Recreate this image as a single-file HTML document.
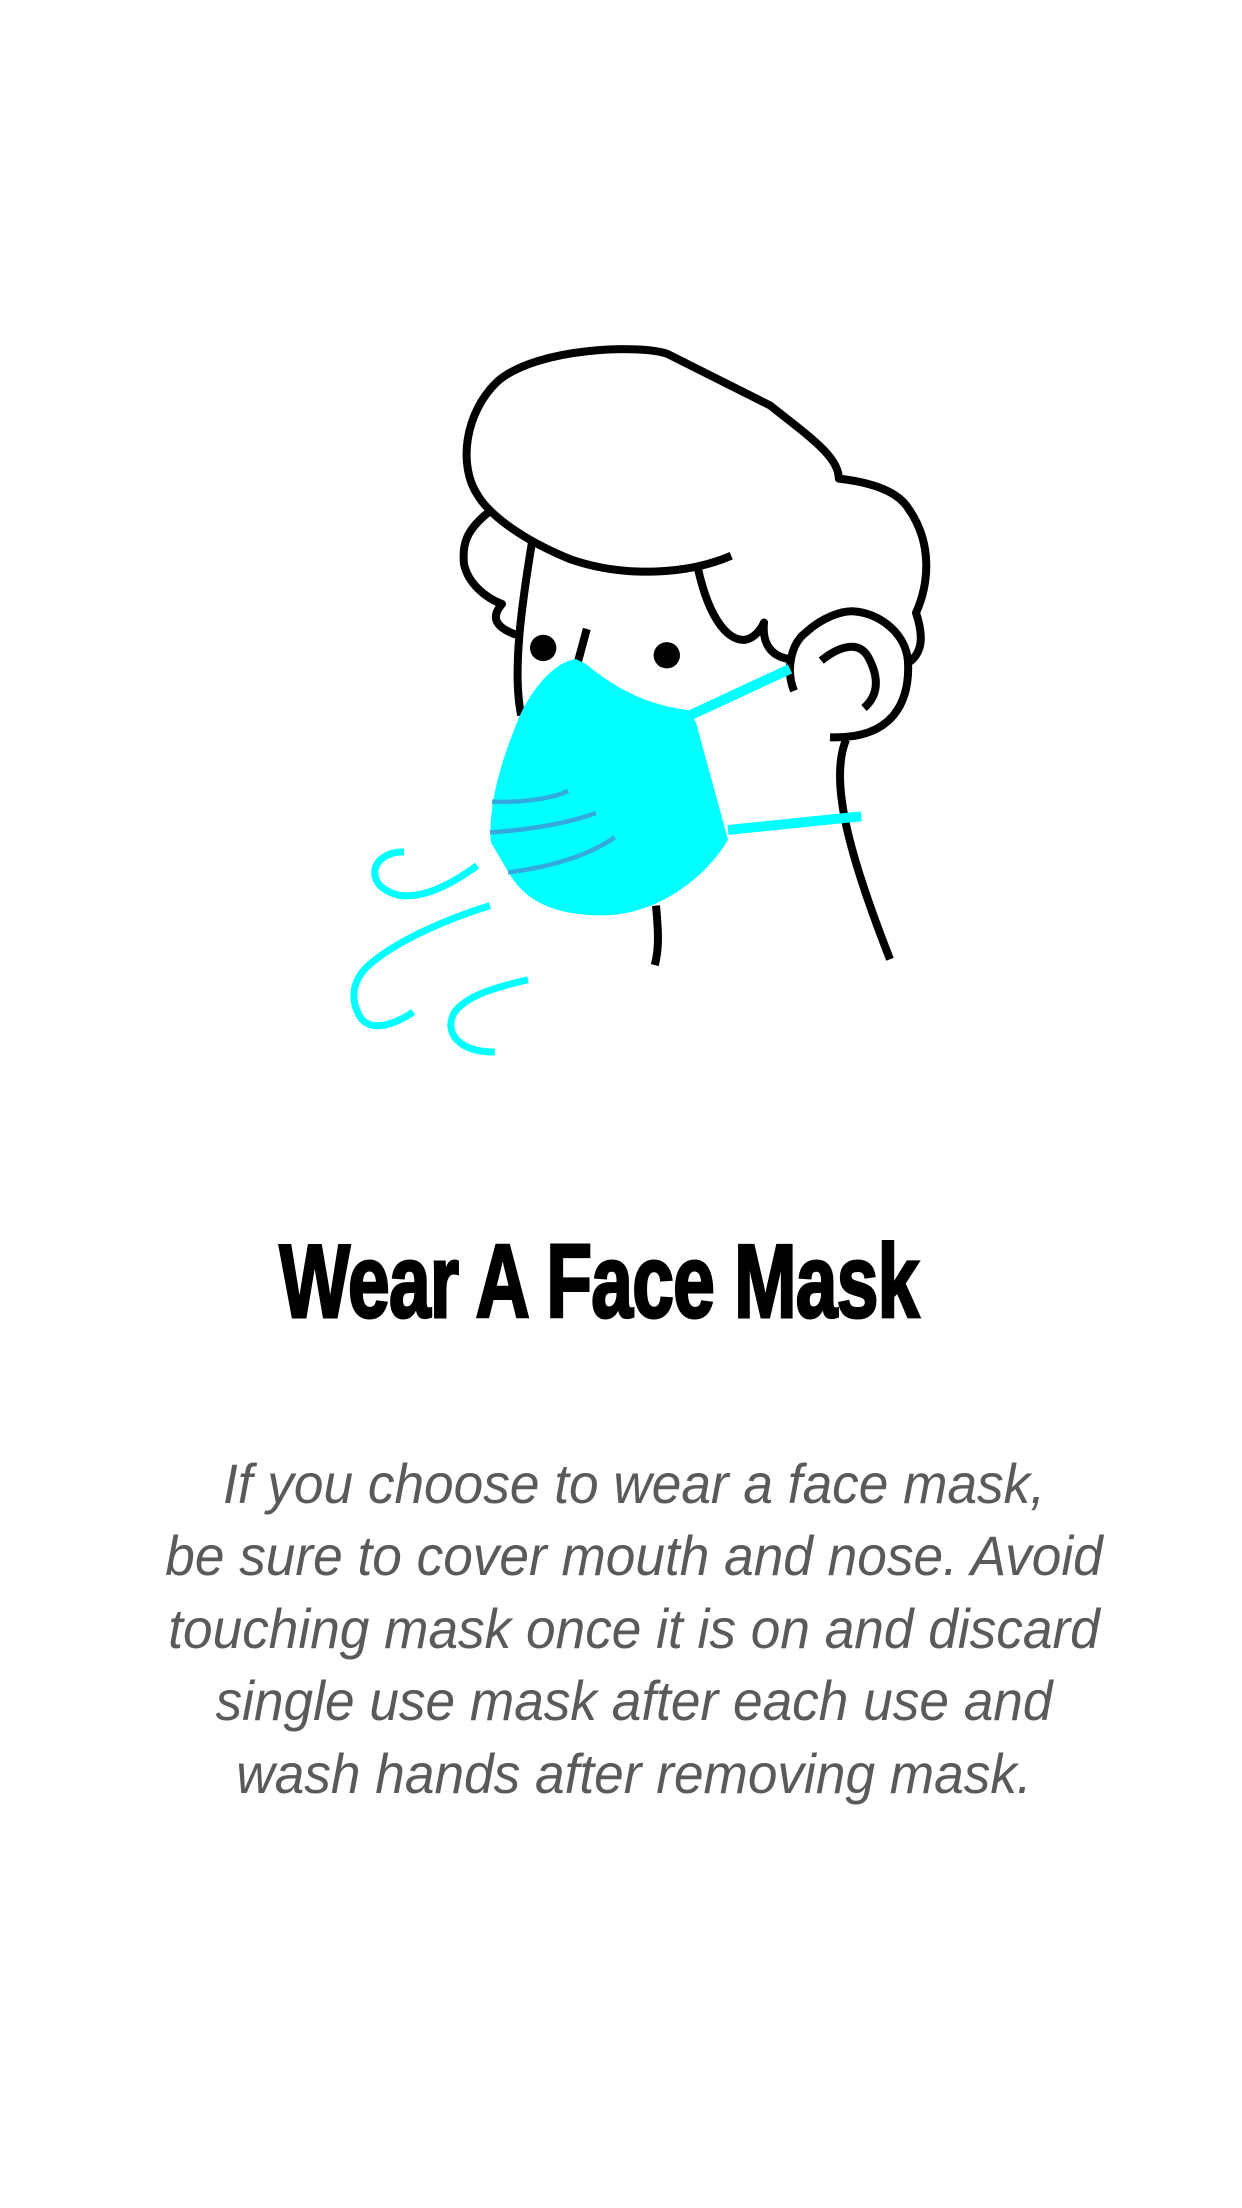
<!DOCTYPE html>
<html><head><meta charset="utf-8"><style>
html,body{margin:0;padding:0;background:#fff;}
body{width:1242px;height:2208px;position:relative;overflow:hidden;}
svg{position:absolute;left:0;top:0;}
.t{position:absolute;left:0;width:1242px;top:1222px;text-align:center;font-family:"Liberation Sans Narrow","Liberation Sans",sans-serif;font-weight:bold;font-size:104px;line-height:120px;color:#000;letter-spacing:-1px;-webkit-text-stroke:3px #000;transform:translateX(-22px) scaleX(0.72);}
.b{position:absolute;left:0;width:1242px;top:1448px;text-align:center;font-family:"Liberation Sans",sans-serif;font-style:italic;font-size:56px;line-height:72.4px;color:#5a5a5a;transform:translateX(13px) scaleX(0.95);}
</style></head><body>
<svg width="1242" height="2208" viewBox="0 0 1242 2208">
<g transform="translate(330,320) scale(0.4,0.488)" fill="none" stroke-linecap="butt" stroke-linejoin="round">
<g stroke="#000" stroke-width="8">
<path vector-effect="non-scaling-stroke" d="M1003,483 C900,520 740,530 600,490 C480,450 400,400 370,360 C320,300 335,190 420,125 C520,55 780,50 845,70 L1100,175 C1200,240 1272,280 1272,325 C1380,335 1425,360 1445,385 C1510,460 1495,545 1465,600 C1485,650 1480,680 1450,700"/>
<path vector-effect="non-scaling-stroke" d="M1160,760 C1140,720 1150,665 1190,640 C1230,610 1280,595 1310,597 C1370,600 1440,640 1445,700 C1450,780 1410,860 1250,855"/>
<path vector-effect="non-scaling-stroke" d="M1228,698 C1270,670 1320,655 1345,690 C1375,735 1370,770 1335,795"/>
<path vector-effect="non-scaling-stroke" d="M1290,860 C1250,940 1290,1080 1400,1310"/>
<path vector-effect="non-scaling-stroke" d="M398,393 C340,430 330,460 335,500 C345,540 390,570 430,582 C400,610 415,630 465,645"/>
<path vector-effect="non-scaling-stroke" d="M505,455 C480,580 455,720 478,810"/>
<path vector-effect="non-scaling-stroke" d="M920,510 C950,620 1000,660 1040,655 C1065,650 1080,630 1085,620 C1080,660 1100,690 1150,695"/>
<path vector-effect="non-scaling-stroke" d="M642,633 L620,700"/>
<path vector-effect="non-scaling-stroke" d="M815,1200 C822,1260 822,1290 812,1322"/>
</g>
<ellipse cx="533" cy="672" rx="33" ry="27" fill="#000"/>
<ellipse cx="842" cy="687" rx="33" ry="27" fill="#000"/>
<path d="M615,695 C560,700 500,760 470,820 C430,900 395,990 402,1070 L445,1130 C480,1180 540,1220 680,1220 C830,1220 950,1130 995,1065 L915,825 L900,800 C800,790 720,760 640,705 Z" fill="#00ffff"/>
<g stroke="#00ffff" stroke-width="10">
<path vector-effect="non-scaling-stroke" d="M900,810 L1150,715"/>
<path vector-effect="non-scaling-stroke" d="M995,1045 L1328,1017"/>
</g>
<g stroke="#33aadd" stroke-width="4.5">
<path vector-effect="non-scaling-stroke" d="M405,987 C480,990 560,980 595,965"/>
<path vector-effect="non-scaling-stroke" d="M400,1050 C500,1045 600,1030 665,1010"/>
<path vector-effect="non-scaling-stroke" d="M445,1132 C560,1120 650,1095 712,1060"/>
</g>
<g stroke="#00ffff" stroke-width="7">
<path vector-effect="non-scaling-stroke" d="M185,1090 C140,1090 110,1110 112,1135 C115,1165 160,1180 190,1180 C260,1180 330,1140 368,1118"/>
<path vector-effect="non-scaling-stroke" d="M400,1200 C300,1225 170,1270 100,1320 C50,1355 55,1395 70,1420 C90,1460 150,1450 208,1418"/>
<path vector-effect="non-scaling-stroke" d="M495,1352 C410,1368 340,1385 310,1420 C285,1460 320,1500 412,1500"/>
</g>
</g>
</svg>
<div class="t">Wear A Face Mask</div>
<div class="b">If you choose to wear a face mask,<br>be sure to cover mouth and nose. Avoid<br>touching mask once it is on and discard<br>single use mask after each use and<br>wash hands after removing mask.</div>
</body></html>
